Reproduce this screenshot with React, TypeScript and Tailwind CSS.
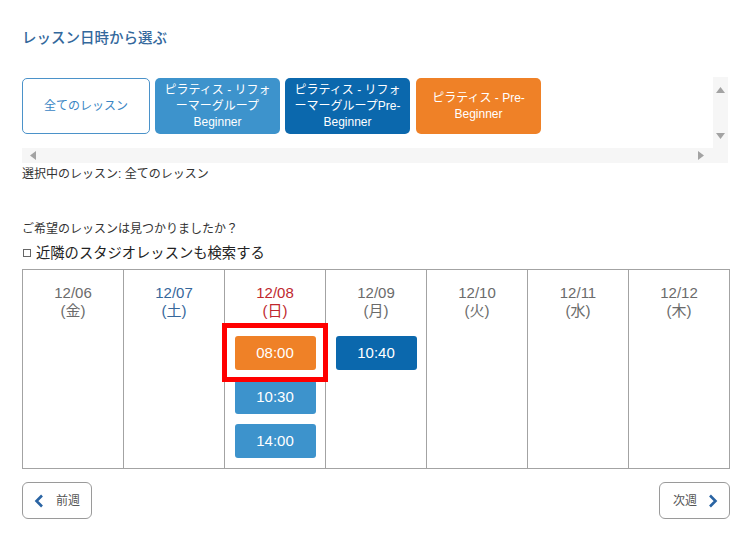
import React from "react";

const F = { fontFamily: '"Liberation Sans", Arial, "Noto Sans CJK JP", sans-serif' };

const days = [
  { d: "12/06", w: "(金)", c: "text-[#6b6b6b]", slots: [] as { t: string; c: string }[] },
  { d: "12/07", w: "(土)", c: "text-[#36679b]", slots: [] },
  {
    d: "12/08",
    w: "(日)",
    c: "text-[#c0282e]",
    slots: [
      { t: "08:00", c: "bg-[#ef8127]" },
      { t: "10:30", c: "bg-[#3d93cc]" },
      { t: "14:00", c: "bg-[#3d93cc]" },
    ],
  },
  { d: "12/09", w: "(月)", c: "text-[#6b6b6b]", slots: [{ t: "10:40", c: "bg-[#0b68ad]" }] },
  { d: "12/10", w: "(火)", c: "text-[#6b6b6b]", slots: [] },
  { d: "12/11", w: "(水)", c: "text-[#6b6b6b]", slots: [] },
  { d: "12/12", w: "(木)", c: "text-[#6b6b6b]", slots: [] },
];

export default function App() {
  return (
    <div style={F} className="relative w-[750px] h-[540px] bg-white px-[22px] pt-[28px] overflow-hidden">
      <div className="text-[14.5px] leading-[20px] text-[#33689c] font-medium">レッスン日時から選ぶ</div>

      {/* scroll box */}
      <div className="mt-[29px] grid grid-cols-[691px_15px] grid-rows-[71px_15px] w-[706px]">
        <div className="flex items-start pt-[1px] gap-[5px] overflow-hidden">
          <div className="w-[128px] h-[56px] shrink-0 rounded-[5px] border border-[#4b92c9] bg-white flex items-center justify-center text-[12px] text-[#3a86c4]">
            全てのレッスン
          </div>
          <div className="w-[125px] h-[56px] shrink-0 rounded-[5px] bg-[#3d93cc] flex items-center justify-center text-center text-[12px] leading-[16px] text-white">
            <div>
              ピラティス - リフォ
              <br />
              ーマーグループ
              <br />
              Beginner
            </div>
          </div>
          <div className="w-[125px] h-[56px] shrink-0 rounded-[5px] bg-[#0b68ad] flex items-center justify-center text-center text-[12px] leading-[16px] text-white">
            <div>
              ピラティス - リフォ
              <br />
              ーマーグループPre-
              <br />
              Beginner
            </div>
          </div>
          <div className="ml-[1px] w-[125px] h-[56px] shrink-0 rounded-[5px] bg-[#ef8127] flex items-center justify-center text-center text-[12px] leading-[16px] text-white">
            <div>
              ピラティス - Pre-
              <br />
              Beginner
            </div>
          </div>
        </div>
        <div className="bg-[#f6f6f6] flex flex-col items-center justify-between pt-[10px] pb-[9px]">
          <svg width="9" height="6" viewBox="0 0 9 6">
            <polygon points="0,6 4.5,0 9,6" fill="#a3a3a3" />
          </svg>
          <svg width="9" height="6" viewBox="0 0 9 6">
            <polygon points="0,0 4.5,6 9,0" fill="#a3a3a3" />
          </svg>
        </div>
        <div className="bg-[#f6f6f6] flex items-center justify-between pl-[8px] pr-[9px]">
          <svg width="6" height="9" viewBox="0 0 6 9">
            <polygon points="6,0 0,4.5 6,9" fill="#a3a3a3" />
          </svg>
          <svg width="6" height="9" viewBox="0 0 6 9">
            <polygon points="0,0 6,4.5 0,9" fill="#a3a3a3" />
          </svg>
        </div>
        <div className="bg-[#f6f6f6]" />
      </div>

      <div className="mt-[3px] text-[12px] leading-[16px] text-[#333]">選択中のレッスン: 全てのレッスン</div>

      <div className="mt-[39px] text-[12px] leading-[16px] text-[#333]">ご希望のレッスンは見つかりましたか？</div>
      <div className="mt-[6px] flex items-center text-[14.3px] leading-[20px] text-[#222]">
        <span className="inline-block w-[8px] h-[8px] border border-[#666] mr-[5px] ml-[1px]" />
        近隣のスタジオレッスンも検索する
      </div>

      {/* calendar */}
      <div className="mt-[6px] flex w-[708px] h-[200px] border-t border-b border-l border-[#a3a3a3]">
        {days.map((day) => (
          <div key={day.d} className="w-[101px] shrink-0 border-r border-[#a3a3a3] flex flex-col items-center pt-[14px]">
            <div className={`text-[15px] leading-[18px] text-center ${day.c}`}>
              {day.d}
              <br />
              {day.w}
            </div>
            <div className="mt-[16px] flex flex-col gap-[10px]">
              {day.slots.map((s) => (
                <div
                  key={s.t}
                  className={`w-[81px] h-[34px] rounded-[3px] ${s.c} flex items-center justify-center text-[15px] text-white`}
                >
                  {s.t}
                </div>
              ))}
            </div>
          </div>
        ))}
      </div>

      {/* nav */}
      <div className="mt-[13px] flex justify-between w-[708px]">
        <div className="w-[70px] h-[37px] rounded-[6px] border border-[#9a9a9a] flex items-center pl-[11px] gap-[12px] text-[12px] text-[#555]">
          <svg width="10" height="14" viewBox="0 0 10 14">
            <polyline points="8,1.5 2.5,7 8,12.5" fill="none" stroke="#2a64a3" strokeWidth="2.6" />
          </svg>
          前週
        </div>
        <div className="w-[71px] h-[37px] rounded-[6px] border border-[#9a9a9a] flex items-center justify-end pr-[11px] gap-[11px] text-[12px] text-[#555]">
          次週
          <svg width="10" height="14" viewBox="0 0 10 14">
            <polyline points="2,1.5 7.5,7 2,12.5" fill="none" stroke="#2a64a3" strokeWidth="2.6" />
          </svg>
        </div>
      </div>

      {/* highlight annotation */}
      <div className="absolute left-[222px] top-[323px] w-[106px] h-[59px] border-[5px] border-[#ff0000]" />
    </div>
  );
}
